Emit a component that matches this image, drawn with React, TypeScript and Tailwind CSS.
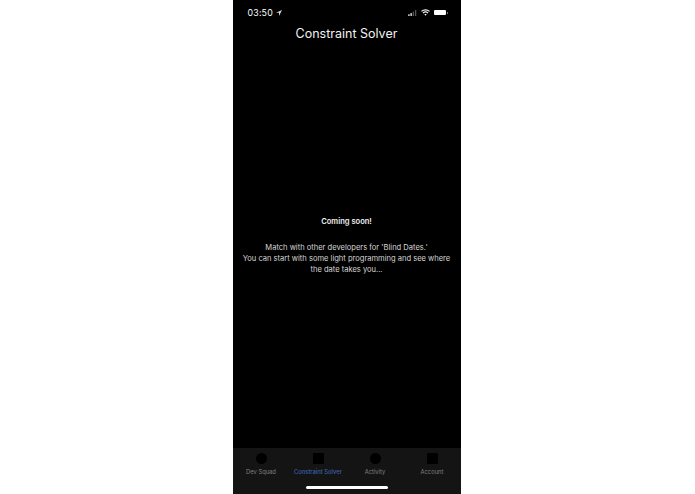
const font = "font-['Inter','Liberation_Sans',sans-serif]"

const tabs = [
  { label: 'Dev Squad', shape: 'rounded-full', active: false },
  { label: 'Constraint Solver', shape: 'rounded-[1px]', active: true },
  { label: 'Activity', shape: 'rounded-full', active: false },
  { label: 'Account', shape: 'rounded-[1px]', active: false },
]

function StatusBar() {
  return (
    <div className="flex h-[19px] items-end justify-between pl-[15px] pr-[13px] text-white">
      <div className="flex items-center gap-[3px]">
        <span className="text-[8.8px] leading-[12px] tracking-[0.2px]">03:50</span>
        <svg width="6" height="6" viewBox="0 0 10 10" fill="#d8d8d8" aria-hidden>
          <path d="M10 0 0 4.5h5V10z" />
        </svg>
      </div>
      <div className="flex items-center gap-[4px] pb-[3px]">
        <svg width="9" height="6" viewBox="0 0 10 7" aria-hidden>
          <rect x="0" y="5" width="1.6" height="2" fill="#e5e5e5" />
          <rect x="2.6" y="3.6" width="1.6" height="3.4" fill="#e5e5e5" />
          <rect x="5.2" y="2" width="1.6" height="5" fill="#555" />
          <rect x="7.8" y="0" width="1.6" height="7" fill="#555" />
        </svg>
        <svg width="9" height="7" viewBox="0 0 20 15" fill="none" stroke="#f2f2f2" strokeWidth="2.6" aria-hidden>
          <path d="M1 5c5-4.6 13-4.6 18 0" />
          <path d="M4.5 8.6c3-2.8 8-2.8 11 0" />
          <path d="M10 14.5 7.4 11.6c1.5-1.2 3.7-1.2 5.2 0z" fill="#f2f2f2" stroke="none" />
        </svg>
        <div className="flex items-center">
          <div className="h-[5px] w-[12px] rounded-[1px] bg-white" />
          <div className="ml-[1px] h-[2px] w-[1px] bg-[#777]" />
        </div>
      </div>
    </div>
  )
}

function TabBar() {
  return (
    <div className="flex h-[46px] flex-col bg-[#141414]">
      <div className="grid grid-cols-4 pt-[5px]">
        {tabs.map((t) => (
          <div key={t.label} className="flex flex-col items-center">
            <div className={`h-[11px] w-[11px] bg-black ${t.shape}`} />
            <span
              className={`mt-[4px] whitespace-nowrap text-[5.8px] leading-[8px] ${
                t.active ? 'font-medium text-[#3a62ad]' : 'text-[#808080]'
              }`}
            >
              {t.label}
            </span>
          </div>
        ))}
      </div>
      <div className="mx-auto mt-[10px] h-[3px] w-[82px] rounded-full bg-white" />
    </div>
  )
}

export default function App() {
  return (
    <div className={`flex h-[494px] justify-center bg-white pr-[2px] ${font}`}>
      <div className="flex w-[228px] flex-col bg-black">
        <StatusBar />
        <h1 className="mt-[5px] text-center text-[12.5px] font-normal leading-[19px] text-[#f2f2f2]">
          Constraint Solver
        </h1>
        <div className="flex flex-1 flex-col items-center justify-center px-[8px] text-center text-[7.55px] leading-[11px] text-[#d6d6d6]">
          <p className="font-semibold text-[#f0f0f0]">Coming soon!</p>
          <p className="mt-[15px]">
            Match with other developers for 'Blind Dates.'
            <br />
            You can start with some light programming and see where the date takes you...
          </p>
        </div>
        <TabBar />
      </div>
    </div>
  )
}
